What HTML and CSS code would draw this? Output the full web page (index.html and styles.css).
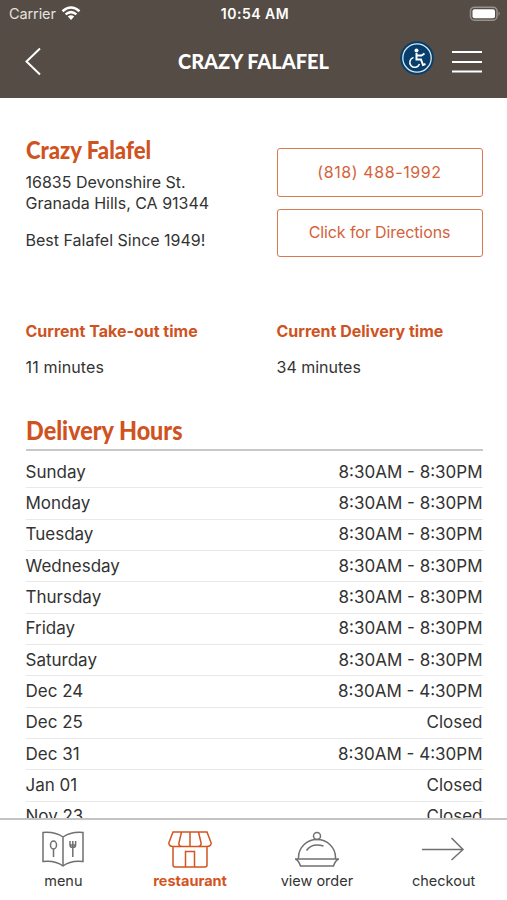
FILE: index.html
```html
<!DOCTYPE html>
<html lang="en">
<head>
<meta charset="utf-8">
<title>Crazy Falafel</title>
<link rel="stylesheet" href="styles.css">
</head>
<body>
<div class="app">
  <header class="header">
    <div class="status">
      <div class="carrier"><span>Carrier</span>
        <svg width="20" height="15" viewBox="0 0 20 15" fill="none" stroke="#fff" stroke-width="2.5"><path d="M1.5 5.2Q10-2.2 18.500 5.200M4.600 8.400Q10 3.800 15.400 8.400"/><path d="M6.800 10.500Q10 7.800 13.200 10.500L10 13.900Z" fill="#fff" stroke="none"/></svg>
      </div>
      <div class="clock">10:54 AM</div>
      <svg class="battery" width="32" height="16" viewBox="0 0 32 16"><rect x="1.500" y="1.200" width="26.500" height="13" rx="4" fill="none" stroke="#98928b" stroke-width="1.500"/><rect x="3.500" y="3.200" width="22.500" height="9" rx="2" fill="#fff"/><path d="M29.500 5.500Q32 7.700 29.500 10Z" fill="#98928b"/></svg>
    </div>
    <div class="titlebar">
      <svg class="back" width="18" height="30" viewBox="0 0 18 30" fill="none" stroke="#fff" stroke-width="2"><path d="M15 2.500L1.500 15.500L15 28.500"/></svg>
      <h1 class="title"><span>CRAZY FALAFEL</span></h1>
      <div class="tools">
        <svg width="34" height="36" viewBox="0 0 34 36" fill="none" stroke="#fff"><circle cx="17" cy="18" r="16.800" fill="#073e6b" stroke="none"/><circle cx="17" cy="18" r="14.200" stroke="#d9e8f2" stroke-width="1.300"/><circle cx="16.500" cy="10.500" r="2" fill="#fff" stroke="none"/><path d="M16.500 13V19.500H21L23 25L25.500 24M17 15.500H21.500L24.500 13.500" stroke-width="2"/><path d="M13.500 17.500A5 5 0 1 0 19.500 24" stroke-width="1.500"/></svg>
        <svg width="30" height="24" viewBox="0 0 30 24" stroke="#fff" stroke-width="2.200"><path d="M0 3H30M0 13H30M0 22.500H30"/></svg>
      </div>
    </div>
  </header>
  <main class="content">
    <section class="intro">
      <div class="about">
        <h2 class="display name"><span>Crazy Falafel</span></h2>
        <address>16835 Devonshire St.<br>Granada Hills, CA 91344</address>
        <p>Best Falafel Since 1949!</p>
      </div>
      <div class="actions"><a class="phone">(818) 488-1992</a><a>Click for Directions</a></div>
    </section>
    <section class="times">
      <div><h3>Current Take-out time</h3><p>11 minutes</p></div>
      <div><h3>Current Delivery time</h3><p>34 minutes</p></div>
    </section>
    <section class="hours">
      <h2 class="display hours-title"><span>Delivery Hours</span></h2>
      <ul>
        <li><span>Sunday</span><span>8:30AM - 8:30PM</span></li>
        <li><span>Monday</span><span>8:30AM - 8:30PM</span></li>
        <li><span>Tuesday</span><span>8:30AM - 8:30PM</span></li>
        <li><span>Wednesday</span><span>8:30AM - 8:30PM</span></li>
        <li><span>Thursday</span><span>8:30AM - 8:30PM</span></li>
        <li><span>Friday</span><span>8:30AM - 8:30PM</span></li>
        <li><span>Saturday</span><span>8:30AM - 8:30PM</span></li>
        <li><span>Dec 24</span><span>8:30AM - 4:30PM</span></li>
        <li><span>Dec 25</span><span>Closed</span></li>
        <li><span>Dec 31</span><span>8:30AM - 4:30PM</span></li>
        <li><span>Jan 01</span><span>Closed</span></li>
        <li><span>Nov 23</span><span>Closed</span></li>
      </ul>
    </section>
  </main>
  <nav class="tabs">
    <a>
      <svg width="44" height="40" viewBox="0 0 44 40"><path d="M22 7Q14 1.500 2 2.500V31.500Q14 30 22 36Q30 30 42 31.500V2.500Q30 1.500 22 7V36"/><ellipse cx="12.500" cy="15" rx="3" ry="4"/><path d="M12.500 19V27M29 11V15Q29 17.500 31.800 17.500T34.600 15V11M31.800 11V27M29 15H34.600"/></svg>
      <span>menu</span></a>
    <a class="active">
      <svg width="44" height="40" viewBox="0 0 44 40"><path d="M5 2H39L43.200 13Q43 16.500 39 16.500H5Q1 16.500 .8 13ZM13.500 2L10.800 13.500Q11 16.500 14 16.500M22 2V16.500M30.500 2L33.200 13.500Q33 16.500 30 16.500M5 16.500V35Q5 37 7 37H37Q39 37 39 35V16.500M17.500 37V21.500H26.500V37"/></svg>
      <span>restaurant</span></a>
    <a>
      <svg width="44" height="40" viewBox="0 0 44 40"><circle cx="22" cy="6" r="3.500"/><path d="M3.500 29V27.500A18.500 18 0 0 1 40.500 27.500V29M11.500 20.500Q17 12.500 28.500 16M.5 29H43.500Q40 31 38.500 36H5.500Q4 31 .5 29Z"/></svg>
      <span>view order</span></a>
    <a>
      <svg width="44" height="40" viewBox="0 0 44 40"><path d="M0 19.500H41M29.500 8L41 19.500L29.500 30"/></svg>
      <span>checkout</span></a>
  </nav>
</div>
</body>
</html>
```
FILE: styles.css
```css
* { box-sizing: border-box; }
body, h1, h2, h3, p, ul { margin: 0; padding: 0; }
body { font-family: Inter, "Liberation Sans", sans-serif; color: #333; background: #fff; font-size: 16px; line-height: 21px; }
svg { display: block; }
.app { height: 900px; overflow: hidden; display: flex; flex-direction: column; }
.header { height: 98px; flex: none; background: #544c45; color: #fff; }
.status { height: 27px; display: grid; grid-template-columns: 1fr auto 1fr; align-items: center; padding: 0 6px 0 9px; font-size: 14.500px; }
.carrier { display: flex; align-items: center; gap: 5px; color: #e5e2df; letter-spacing: -.1px; }
.clock { font-weight: 600; font-size: 14px; letter-spacing: .5px; }
.battery { justify-self: end; }
.titlebar { height: 67px; display: grid; grid-template-columns: 1fr auto 1fr; align-items: center; padding: 0 25px; }
.title, .display { font-family: Lato, sans-serif; }
.title { font-size: 21px; font-weight: 900; width: 152px; white-space: nowrap; }
.title span, .display span { display: inline-block; transform-origin: left center; }
.title span { transform: scaleX(.95); }
.tools { display: flex; justify-content: end; gap: 18px; align-items: center; }
.tools svg:first-child { margin-top: -6px; }
.content { flex: 1; min-height: 0; overflow: hidden; padding: 0 24.500px 0 25.500px; }
.intro, .times { display: grid; grid-template-columns: 1fr 206px; }
.intro { padding-top: 35px; height: 223px; }
.display { color: #cf531f; font-weight: 900; line-height: 32px; white-space: nowrap; }
.name { font-size: 25px; height: 39px; }
.name span { transform: scaleX(.885); }
address { font-style: normal; }
.about p { margin-top: 16px; }
.actions { display: flex; flex-direction: column; gap: 12px; padding-top: 14.500px; }
.actions a { height: 48px; border: 1.500px solid #dc7850; border-radius: 3px; color: #d4623a; display: flex; justify-content: center; align-items: center; letter-spacing: -.1px; }
.actions .phone { height: 49px; letter-spacing: .6px; }
.times h3 { color: #cf531f; font-size: 16px; font-weight: 700; }
.times p { margin-top: 15px; }
.times div:first-child p { letter-spacing: .15px; }
.hours { margin-top: 36px; font-size: 17px; }
.hours-title { font-size: 27px; height: 37px; border-bottom: 2px solid #c8c8c8; margin-bottom: 6px; }
.hours-title span { transform: scaleX(.865); }
ul { list-style: none; }
li { display: flex; justify-content: space-between; align-items: center; height: 31.350px; border-bottom: 1px solid #e8e8e8; }
.tabs { height: 82px; flex: none; background: #fff; border-top: 2px solid #c4c4c4; display: grid; grid-template-columns: repeat(4, 1fr); font-size: 14.500px; }
.tabs a { display: flex; flex-direction: column; align-items: center; padding-top: 9.500px; }
.tabs svg { fill: none; stroke: #707070; stroke-width: 1.500; }
.tabs .active { color: #d4541f; font-weight: 700; }
.tabs .active svg { stroke: #d4541f; }
```
